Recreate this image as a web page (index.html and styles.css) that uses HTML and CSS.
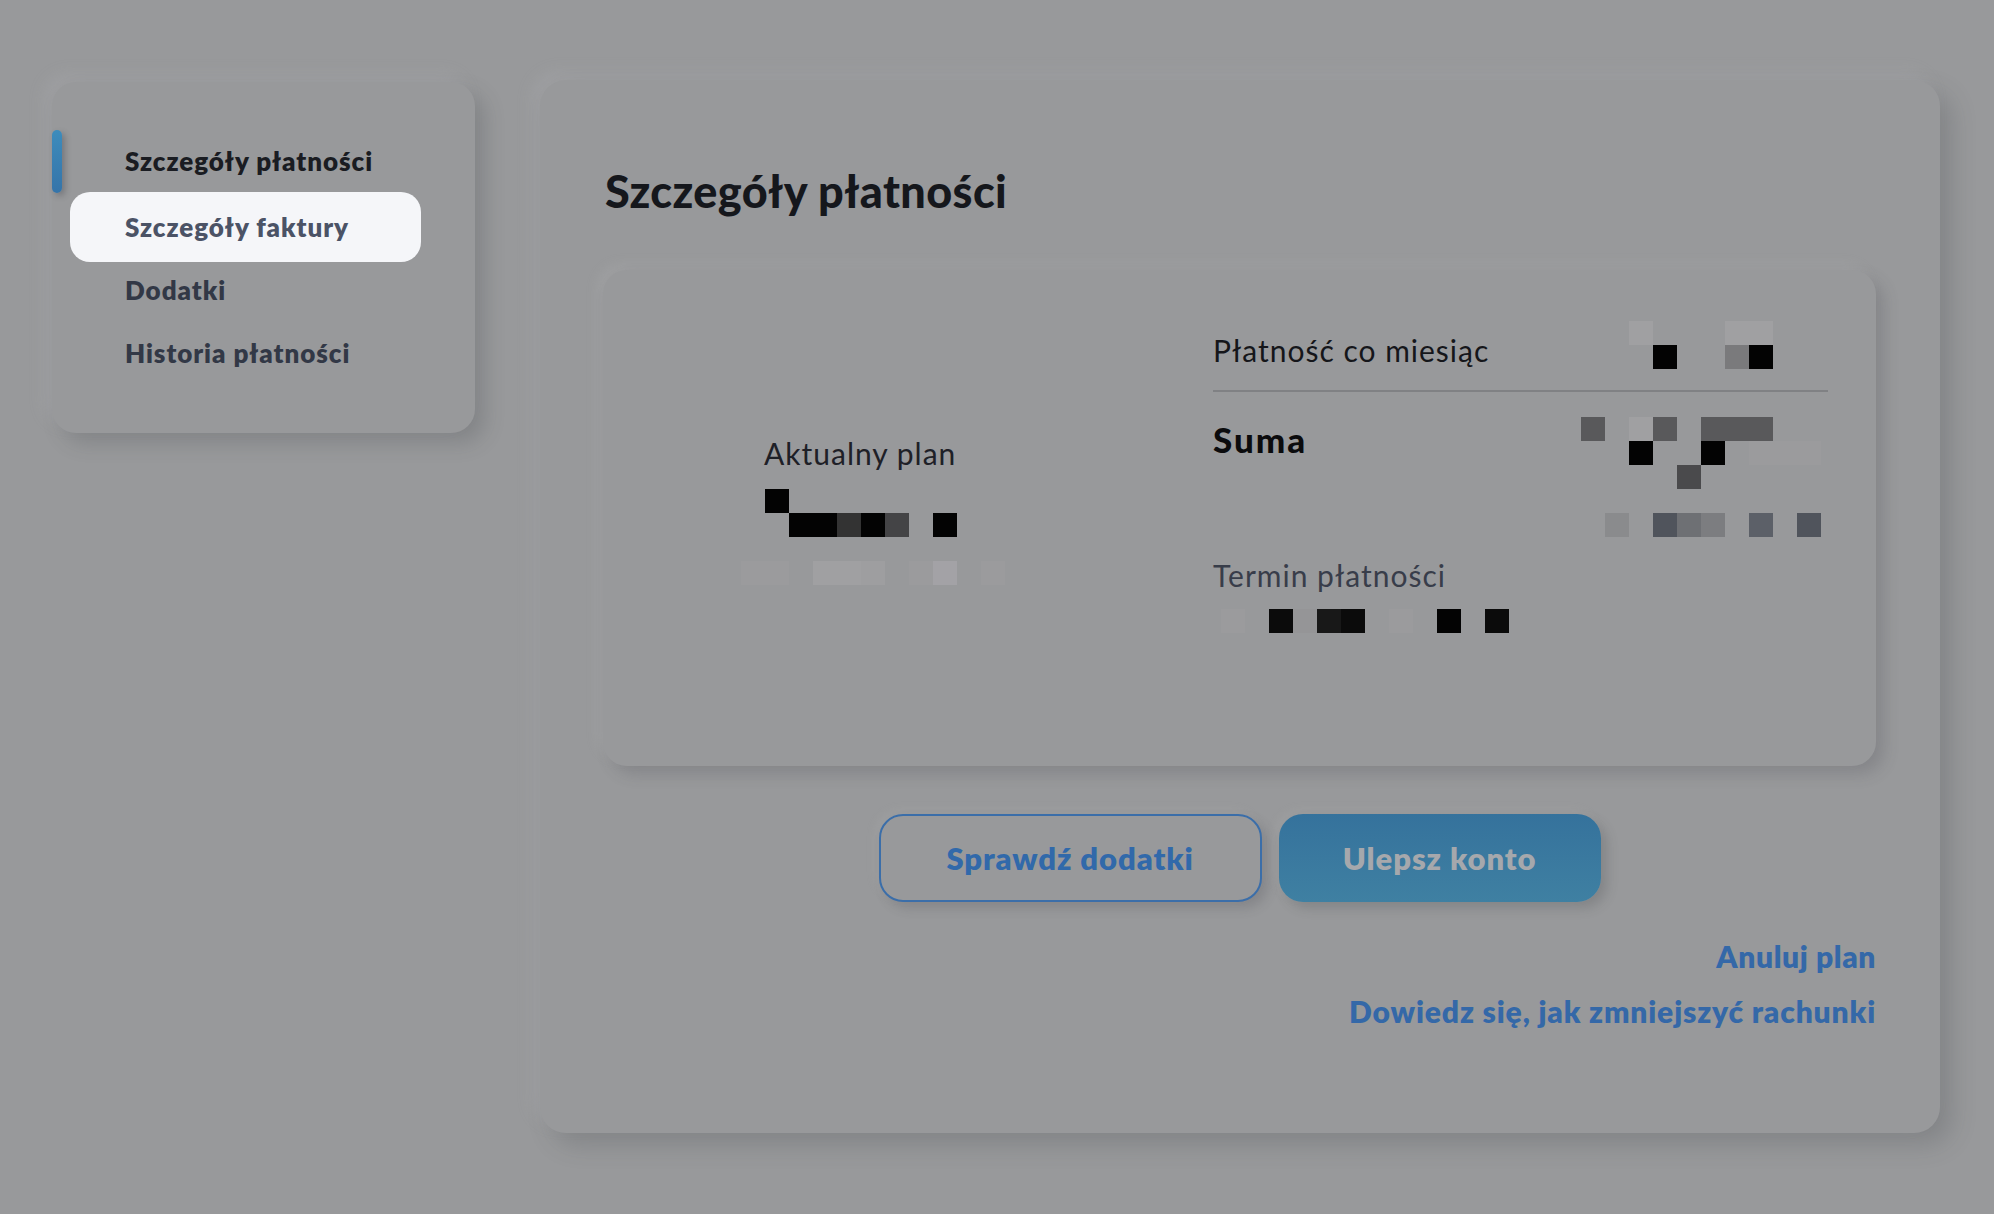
FILE: index.html
```html
<!DOCTYPE html>
<html lang="pl">
<head>
<meta charset="utf-8">
<title>Szczegóły płatności</title>
<link rel="stylesheet" href="styles.css">
</head>
<body>
<div class="page">
  <nav class="sidebar">
    <span class="indicator"></span>
    <a class="nav-item nav-current">Szczegóły płatności</a>
    <a class="nav-item nav-active">Szczegóły faktury</a>
    <a class="nav-item">Dodatki</a>
    <a class="nav-item">Historia płatności</a>
  </nav>

  <main class="main-card">
    <h1 class="title">Szczegóły płatności</h1>

    <section class="plan-card">
      <div class="plan-left">
        <div class="label">Aktualny plan</div>
        <div class="blob blob-11 blob-plan">
          <i></i><i class="k"></i><i></i><i></i><i></i><i></i><i></i><i></i><i></i><i></i><i></i>
          <i></i><i></i><i class="k"></i><i class="k"></i><i class="d33"></i><i class="k"></i><i class="d44"></i><i></i><i class="k"></i><i></i><i></i>
          <i></i><i></i><i></i><i></i><i></i><i></i><i></i><i></i><i></i><i></i><i></i>
          <i class="f1"></i><i class="f1"></i><i></i><i class="f2"></i><i class="f2"></i><i class="f2b"></i><i></i><i class="f1"></i><i class="f3"></i><i></i><i class="f1"></i>
        </div>
      </div>

      <div class="plan-right">
        <div class="row row-monthly">
          <div class="label">Płatność co miesiąc</div>
          <div class="blob blob-6">
            <i class="f2"></i><i></i><i></i><i></i><i class="f2"></i><i class="f2"></i>
            <i></i><i class="k"></i><i></i><i></i><i class="g7a"></i><i class="k"></i>
          </div>
        </div>
        <div class="divider"></div>
        <div class="row row-sum">
          <div class="label label-strong">Suma</div>
          <div class="blob blob-10">
            <i class="d58"></i><i></i><i class="f2"></i><i class="d58"></i><i></i><i class="d58"></i><i class="d58"></i><i class="d58"></i><i></i><i></i>
            <i></i><i></i><i class="k"></i><i></i><i></i><i class="k"></i><i></i><i class="f1"></i><i class="f1"></i><i class="f1"></i>
            <i></i><i></i><i></i><i></i><i class="d4a"></i><i></i><i></i><i></i><i></i><i></i>
            <i></i><i></i><i></i><i></i><i></i><i></i><i></i><i></i><i></i><i></i>
            <i></i><i class="g8a"></i><i></i><i class="s50"></i><i class="s6e"></i><i class="s7c"></i><i></i><i class="s5c"></i><i></i><i class="s50"></i>
          </div>
        </div>
        <div class="label label-muted">Termin płatności</div>
        <div class="blob blob-12 blob-due">
          <i class="f1"></i><i></i><i class="k1"></i><i class="g95"></i><i class="d18"></i><i class="k1"></i><i></i><i class="f1"></i><i></i><i class="k"></i><i></i><i class="k1"></i>
        </div>
      </div>
    </section>

    <div class="actions">
      <button class="btn btn-outline">Sprawdź dodatki</button>
      <button class="btn btn-primary">Ulepsz konto</button>
    </div>

    <div class="links">
      <a class="link">Anuluj plan</a>
      <a class="link link-second">Dowiedz się, jak zmniejszyć rachunki</a>
    </div>
  </main>
</div>
</body>
</html>
```
FILE: styles.css
```css
* { box-sizing: border-box; }

html, body {
  margin: 0;
  padding: 0;
  background: #98999b;
  font-family: Lato, "Noto Sans", sans-serif;
}

.page {
  display: flex;
  align-items: flex-start;
  gap: 65px;
  padding: 82px 0 0 52px;
  min-height: 1214px;
}

/* ---------- sidebar ---------- */
.sidebar {
  position: relative;
  width: 423px;
  height: 351px;
  border-radius: 24px;
  background: #98999b;
  box-shadow: 10px 10px 20px rgba(60, 62, 68, 0.22), -8px -8px 16px rgba(190, 191, 194, 0.18);
  padding: 48px 54px 0 18px;
  display: flex;
  flex-direction: column;
}

.indicator {
  position: absolute;
  left: 0;
  top: 48px;
  width: 10px;
  height: 63px;
  border-radius: 5px;
  background: linear-gradient(180deg, #3d8cbc 0%, #3574a9 100%);
  box-shadow: 3px 3px 6px rgba(40, 44, 52, 0.3);
}

.nav-item {
  display: block;
  height: 63px;
  line-height: 63px;
  padding-left: 55px;
  font-size: 26px;
  font-weight: 800;
  letter-spacing: 0.95px;
  color: #323846;
  white-space: nowrap;
}

.nav-current { color: #1a1c22; }

.nav-active {
  height: 70px;
  line-height: 70px;
  margin: -1px 0 -3px;
  border-radius: 20px;
  background: #f5f6f9;
  color: #4b5366;
}

/* ---------- main card ---------- */
.main-card {
  width: 1400px;
  height: 1053px;
  margin-top: -2px;
  border-radius: 26px;
  background: #98999b;
  box-shadow: 12px 12px 24px rgba(60, 62, 68, 0.22), -8px -8px 16px rgba(190, 191, 194, 0.18);
  padding: 89px 64px 0 63px;
  display: flex;
  flex-direction: column;
}

.title {
  margin: 0 0 57px 2px;
  font-size: 45px;
  line-height: 44px;
  font-weight: 900;
  letter-spacing: 0.4px;
  color: #15171c;
  white-space: nowrap;
}

.plan-card {
  height: 496px;
  border-radius: 24px;
  background: #98999b;
  box-shadow: 8px 8px 16px rgba(60, 62, 68, 0.2), -6px -6px 12px rgba(190, 191, 194, 0.16);
  padding: 51px 48px 0 161px;
  display: flex;
}

.plan-left {
  width: 449px;
  padding-top: 114px;
}

.plan-right {
  flex: 1;
  display: flex;
  flex-direction: column;
}

.label {
  font-size: 30px;
  line-height: 36px;
  font-weight: 400;
  letter-spacing: 1px;
  color: #15161a;
  white-space: nowrap;
}

.plan-left .label { color: #1e2027; }

.label-strong {
  font-size: 35px;
  line-height: 38px;
  font-weight: 900;
  letter-spacing: 2px;
  color: #0b0b0d;
}

.label-muted {
  margin-top: 20px;
  color: #383d4a;
}

.row {
  display: flex;
  justify-content: space-between;
  align-items: flex-start;
}

.row-monthly {
  height: 48px;
  padding-right: 55px;
}
.row-monthly .label { margin-top: 11px; }

.divider {
  margin-top: 21px;
  height: 2px;
  background: #808184;
}

.row-sum {
  margin-top: 25px;
  height: 120px;
  padding-right: 7px;
}
.row-sum .label { margin-top: 3px; }

/* pixelated (censored) values */
.blob {
  display: grid;
  grid-auto-rows: 24px;
}
.blob-6 { grid-template-columns: repeat(6, 24px); }
.blob-10 { grid-template-columns: repeat(10, 24px); }
.blob-11 { grid-template-columns: repeat(11, 24px); }
.blob-12 { grid-template-columns: repeat(12, 24px); }

.blob-plan { margin: 18px 0 0 -23px; }
.blob-due { margin: 16px 0 0 8px; align-self: flex-start; }

.blob i { display: block; }
.blob .k { background: #030303; }
.blob .k1 { background: #0b0b0b; }
.blob .d18 { background: #181818; }
.blob .d33 { background: #333333; }
.blob .d44 { background: #444446; }
.blob .d4a { background: #4a4a4c; }
.blob .d58 { background: #59595b; }
.blob .g7a { background: #7a7a7c; }
.blob .g8a { background: #8a8b8d; }
.blob .g95 { background: #959597; }
.blob .s50 { background: #50545c; }
.blob .s5c { background: #5c6068; }
.blob .s6e { background: #6e7074; }
.blob .s7c { background: #7c7d80; }
.blob .f1 { background: #9b9b9d; }
.blob .f2 { background: #a0a0a2; }
.blob .f2b { background: #9e9ea0; }
.blob .f3 { background: #a3a2a6; }

/* ---------- actions ---------- */
.actions {
  margin-top: 48px;
  display: flex;
  justify-content: center;
  gap: 17px;
}

.btn {
  height: 88px;
  border-radius: 24px;
  font-family: Lato, "Noto Sans", sans-serif;
  font-size: 31px;
  font-weight: 800;
  letter-spacing: 0.9px;
  padding: 0;
  cursor: pointer;
}

.btn-outline {
  width: 383px;
  background: #98999b;
  border: 2px solid #3b6ea9;
  color: #3169aa;
  box-shadow: 6px 6px 12px rgba(60, 62, 68, 0.2), -4px -4px 10px rgba(190, 191, 194, 0.14);
}

.btn-primary {
  width: 322px;
  border: none;
  background: linear-gradient(180deg, #35729c 0%, #3f80a2 100%);
  color: #a6a8ac;
  box-shadow: 6px 6px 12px rgba(60, 62, 68, 0.22), -4px -4px 10px rgba(190, 191, 194, 0.14);
}

/* ---------- links ---------- */
.links {
  margin-top: 36px;
  display: flex;
  flex-direction: column;
  align-items: flex-end;
}

.link {
  font-size: 30px;
  line-height: 36px;
  font-weight: 800;
  letter-spacing: 0.6px;
  color: #3468a8;
  white-space: nowrap;
}

.link-second { margin-top: 19px; letter-spacing: 0.85px; }
```
